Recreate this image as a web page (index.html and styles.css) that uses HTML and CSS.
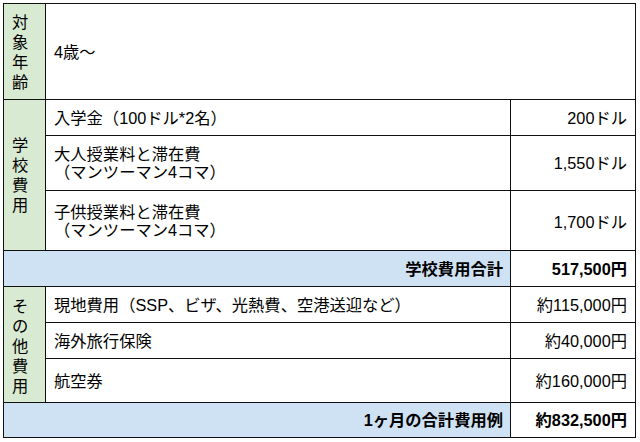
FILE: index.html
```html
<!DOCTYPE html>
<html lang="ja">
<head>
<meta charset="utf-8">
<link rel="stylesheet" href="styles.css">
</head>
<body>
<div class="sheet">
  <div class="cell label r1">対象年齢</div>
  <div class="cell text wide r1">4歳〜</div>

  <div class="cell label school">学校費用</div>
  <div class="cell text">入学金（100ドル*2名）</div>
  <div class="cell num">200ドル</div>
  <div class="cell text two">大人授業料と滞在費<br>（マンツーマン4コマ）</div>
  <div class="cell num">1,550ドル</div>
  <div class="cell text two">子供授業料と滞在費<br>（マンツーマン4コマ）</div>
  <div class="cell num low">1,700ドル</div>

  <div class="cell total">学校費用合計</div>
  <div class="cell num bold">517,500円</div>

  <div class="cell label other">その他費用</div>
  <div class="cell text">現地費用（SSP、ビザ、光熱費、空港送迎など）</div>
  <div class="cell num">約115,000円</div>
  <div class="cell text">海外旅行保険</div>
  <div class="cell num">約40,000円</div>
  <div class="cell text">航空券</div>
  <div class="cell num">約160,000円</div>

  <div class="cell total">1ヶ月の合計費用例</div>
  <div class="cell num bold">約832,500円</div>
</div>
</body>
</html>
```
FILE: styles.css
```css
html, body {
  margin: 0;
  padding: 0;
  background: #ffffff;
}
body {
  padding: 3px 0 0 3px;
  font-family: "Liberation Sans", "Noto Sans CJK JP", sans-serif;
  font-size: 16.3px;
  color: #000;
}
.sheet {
  display: grid;
  width: max-content;
  grid-template-columns: 41px 464px 124px;
  grid-template-rows: 95px 35px 54px 59px 35px 35px 35px 43px 34px;
  gap: 1px;
  background: #111;
  border: 1px solid #111;
}
.cell {
  background: #ffffff;
  display: flex;
  align-items: center;
  padding: 0 8px;
  line-height: 18px;
  min-width: 0;
}
.label {
  background: #d9ead3;
  line-height: 20px;
  padding: 0 7px 0 8px;
  word-break: break-all;
}
.label.r1 { grid-row: 1; }
.school { grid-row: 2 / span 3; }
.other { grid-row: 6 / span 3; padding-top: 2px; }
.wide { grid-column: 2 / span 2; }
.num {
  justify-content: flex-end;
  white-space: nowrap;
}
.low { padding-top: 3px; }
.bold { font-weight: bold; }
.total {
  grid-column: 1 / span 2;
  background: #cfe2f3;
  justify-content: flex-end;
  font-weight: bold;
  padding-right: 7px;
}
```
